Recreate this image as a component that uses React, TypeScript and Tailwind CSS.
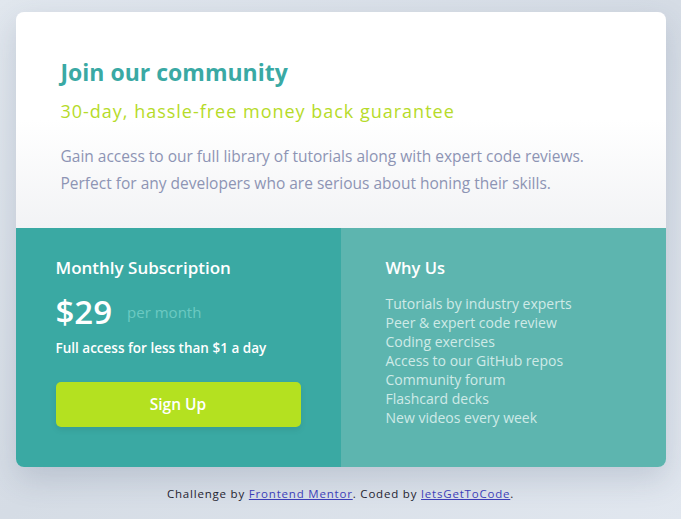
import React from 'react';

const perks = [
  'Tutorials by industry experts',
  'Peer & expert code review',
  'Coding exercises',
  'Access to our GitHub repos',
  'Community forum',
  'Flashcard decks',
  'New videos every week',
];

const App: React.FC = () => {
  return (
    <div
      className="min-h-[519px] w-full bg-gradient-to-br from-[#e1e7ee] via-[#d5dce5] to-[#e1e7ef] pt-3 pb-4"
      style={{ fontFamily: '"Open Sans", "Noto Sans", sans-serif' }}
    >
      <div className="mx-auto w-[650px] rounded-lg overflow-hidden shadow-[0_12px_30px_rgba(60,80,110,0.18)]">
        {/* top */}
        <div className="bg-gradient-to-b from-white via-white to-[#f2f3f5] px-[45px] pt-[46px] pb-[31px]">
          <h1 className="text-[23px] font-bold leading-[28px] text-[#3aa9a4]">Join our community</h1>
          <p className="mt-[14px] text-[18px] font-medium leading-[22px] tracking-[0.055em] text-[#b6db29]">
            30-day, hassle-free money back guarantee
          </p>
          <p className="mt-[21px] text-[15.5px] leading-[27px] text-[#8d94b4]">
            Gain access to our full library of tutorials along with expert code reviews.
            <br />
            Perfect for any developers who are serious about honing their skills.
          </p>
        </div>

        {/* bottom */}
        <div className="grid grid-cols-2">
          <div className="bg-[#3aa9a3] px-10 pt-[29px] pb-[40px]">
            <h2 className="text-[17px] font-semibold leading-[22px] text-white">Monthly Subscription</h2>
            <div className="mt-[15px] flex items-center gap-[15px]">
              <span className="text-[33px] font-semibold leading-[36px] text-white">$29</span>
              <span className="text-[15px] font-medium leading-[20px] text-[#6cc9c2]">per month</span>
            </div>
            <p className="mt-[9px] text-[13.5px] font-semibold leading-[18px] text-white">
              Full access for less than $1 a day
            </p>
            <button className="mt-[25px] h-[45px] w-[245px] rounded-[5px] bg-[#b4e120] text-[15.5px] font-semibold text-white shadow-[0_3px_6px_rgba(0,0,0,0.08)]">
              Sign Up
            </button>
          </div>
          <div className="bg-[#5db5af] px-[45px] pt-[29px]">
            <h2 className="text-[16.5px] font-semibold leading-[22px] text-white">Why Us</h2>
            <ul className="mt-[15px] text-[14px] leading-[19px] text-[#cfeae7]">
              {perks.map((p) => (
                <li key={p}>{p}</li>
              ))}
            </ul>
          </div>
        </div>
      </div>

      <p className="mt-[18px] text-center text-[11.5px] tracking-[0.07em] text-[#1f2430]">
        Challenge by{' '}
        <a href="#" className="text-[#3d3fb8] underline">
          Frontend Mentor
        </a>
        . Coded by{' '}
        <a href="#" className="text-[#3d3fb8] underline">
          letsGetToCode
        </a>
        .
      </p>
    </div>
  );
};

export default App;
